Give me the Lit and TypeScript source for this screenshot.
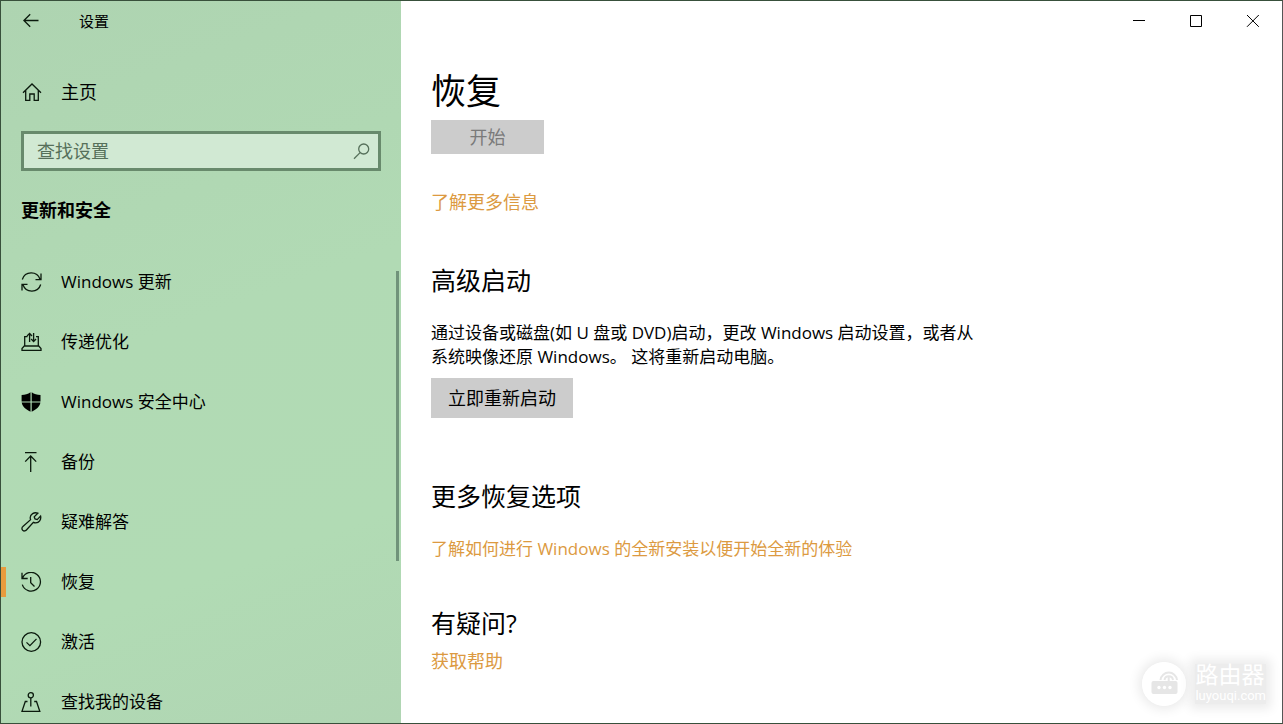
import { LitElement, html, svg, css, TemplateResult } from "lit";
import { customElement, state } from "lit/decorators.js";
import { classMap } from "lit/directives/class-map.js";

interface NavItem {
  id: string;
  label: string;
  icon: TemplateResult;
}

const NAV_ITEMS: NavItem[] = [
  {
    id: "update",
    label: "Windows 更新",
    icon: svg`<path d="M1.3 7.5A9.3 9.3 0 0 1 19 7.3M20 1.5V7.6H14.5M19.7 12.5A9.3 9.3 0 0 1 2 12.7M1 18.5V12.4H6.5"/>`,
  },
  {
    id: "delivery",
    label: "传递优化",
    icon: svg`<path d="M6.5 4.7H3.7V13.5L1 16.5V18.3H20V16.5L17.3 13.5V4.7H15M3.7 14H17.3M8.6 10V1.4M6 4L8.6 1.4L11 4M12.6 1V9.6M10.2 7L12.6 9.6L15 7"/>`,
  },
  {
    id: "security",
    label: "Windows 安全中心",
    icon: svg`<path class="solid" d="M9.5 .3V9.4H.6V3C4 2.9 7 2.2 9.5 .3ZM10.7 .3C13.2 2.2 16 2.9 19.5 3V9.4H10.7ZM.7 10.6H9.5V19.7C4.5 17.5 1.3 14.5 .7 10.6ZM10.7 10.6H19.4C18.8 14.5 15.7 17.5 10.7 19.7Z"/>`,
  },
  {
    id: "backup",
    label: "备份",
    icon: svg`<path d="M4 .7H15.5M9.7 20V4M4.2 9.6L9.7 4L15.2 9.6"/>`,
  },
  {
    id: "troubleshoot",
    label: "疑难解答",
    icon: svg`<path d="M16.8 1.2L13.2 4.8L14 7L16.2 7.6L19.6 4.1C20.4 7.6 18 11 14.6 10.9C13.7 10.9 13 10.7 12.4 10.4L5.4 18C4.4 19.2 2.8 19.3 1.7 18.3C.6 17.2 .7 15.6 1.9 14.6L9.6 7.7C9.3 7 9.2 6.3 9.2 5.6C9.3 2.2 13 -.2 16.8 1.2Z"/>`,
  },
  {
    id: "recovery",
    label: "恢复",
    icon: svg`<path d="M1 .8V6.5H6.7M1.5 6.3A9.3 9.3 0 1 1 1.3 12.6M9.7 5V10.7L13.5 14.5"/>`,
  },
  {
    id: "activation",
    label: "激活",
    icon: svg`<circle cx="10.3" cy="10" r="9.3"/><path d="M5.5 10.4L8.9 13.6L15.5 6.9"/>`,
  },
  {
    id: "find-device",
    label: "查找我的设备",
    icon: svg`<circle cx="9.8" cy="3.3" r="2.6"/><path d="M9.8 6V14.5M6.5 9.5H4.3L1 19.3H18.8L15.5 9.5H13.2"/>`,
  },
];

@customElement("settings-sidebar")
export class SettingsSidebar extends LitElement {
  @state() private current = "recovery";

  static styles = css`
    :host {
      display: flex;
      flex-direction: column;
      min-height: 0;
      overflow: hidden;
      background: linear-gradient(160deg, #aed4b1 0%, #b1dab4 45%, #b1dbb4 75%, #b0d5b3 100%);
      color: #000;
    }
    svg {
      fill: none;
      stroke: #0b1a0d;
      stroke-width: 1.3;
      flex: none;
    }
    .solid {
      fill: #000;
      stroke: none;
    }
    button {
      font: inherit;
      color: inherit;
      background: none;
      border: 0;
      padding: 0;
    }
    .titlebar {
      display: flex;
      align-items: center;
      height: 40px;
      flex: none;
    }
    .back {
      display: flex;
      align-items: center;
      justify-content: center;
      width: 60px;
      height: 40px;
    }
    .app-name {
      font-size: 15px;
      margin-left: 18px;
    }
    .home {
      display: flex;
      align-items: center;
      gap: 19px;
      height: 60px;
      flex: none;
      padding-left: 21px;
      margin-top: 21px;
      color: inherit;
      text-decoration: none;
    }
    .search {
      display: flex;
      align-items: center;
      box-sizing: border-box;
      height: 40px;
      flex: none;
      margin: 9px 20px 0;
      padding: 0 8px 0 13px;
      border: 3px solid #688a6c;
      background: #d1e9d3;
    }
    .search input {
      flex: 1;
      min-width: 0;
      font: inherit;
      border: 0;
      padding: 0;
      outline: 0;
      background: none;
    }
    .search input::placeholder {
      color: #56705a;
      opacity: 1;
    }
    .search svg {
      stroke: #56705a;
    }
    h2 {
      margin: 27px 0 30px;
      padding-left: 20px;
      font-size: 18px;
      line-height: 24px;
      font-weight: 700;
      flex: none;
    }
    .scroller {
      position: relative;
      flex: 1;
      min-height: 0;
      overflow: hidden;
      font-size: 17px;
    }
    .thumb {
      position: absolute;
      right: 2px;
      top: 19px;
      width: 3px;
      height: 290px;
      background: #70937a;
    }
    ul {
      list-style: none;
      margin: 0;
      padding: 0;
    }
    .item {
      display: flex;
      align-items: center;
      box-sizing: border-box;
      width: 100%;
      height: 60px;
      text-align: left;
    }
    .item::before {
      content: "";
      width: 5px;
      height: 30px;
      margin-right: 15px;
    }
    .item svg {
      margin-right: 19px;
    }
    .item.current::before {
      background: #e89b3e;
    }
  `;

  render() {
    return html`
      <div class="titlebar">
        <button class="back" aria-label="返回">
          <svg width="16" height="16" viewBox="0 0 16 16"><path d="M15.5 7.5H1M7.2 1.2L.9 7.5L7.2 13.8" /></svg>
        </button>
        <span class="app-name">设置</span>
      </div>
      <a class="home" href="#home">
        <svg width="20" height="20" viewBox="0 0 20 20">
          <path d="M1 10.7L10 2L19 10.7M3.7 8.3V18.3H7.8V12H12.2V18.3H16.3V8.3" />
        </svg>
        <span>主页</span>
      </a>
      <div class="search" role="search">
        <input type="text" aria-label="查找设置" placeholder="查找设置" />
        <svg width="17" height="17" viewBox="0 0 17 17"><circle cx="10.7" cy="6" r="5" /><path d="M7.1 9.6L1 15.7" /></svg>
      </div>
      <h2>更新和安全</h2>
      <nav class="scroller" aria-label="更新和安全">
        <ul>
          ${NAV_ITEMS.map(
            (item) => html`<li>
              <button
                class=${classMap({ item: true, current: item.id === this.current })}
                @click=${() => (this.current = item.id)}
              >
                <svg width="21" height="20" viewBox="0 0 21 20">${item.icon}</svg>
                <span>${item.label}</span>
              </button>
            </li>`
          )}
        </ul>
        <div class="thumb"></div>
      </nav>
    `;
  }
}

@customElement("recovery-page")
export class RecoveryPage extends LitElement {
  static styles = css`
    :host {
      display: block;
      min-width: 0;
      background: #fff;
      color: #000;
    }
    button {
      font: inherit;
      color: inherit;
      border: 0;
      padding: 0;
      background: none;
    }
    .window-buttons {
      display: flex;
      justify-content: flex-end;
      padding-right: 1px;
    }
    .window-buttons button {
      display: flex;
      align-items: center;
      justify-content: center;
      width: 57px;
      height: 39px;
    }
    svg {
      fill: none;
      stroke: #000;
    }
    .content {
      padding: 0 30px;
      max-width: 556px;
    }
    h1,
    h2,
    p {
      margin: 0;
      font-weight: 400;
    }
    h1 {
      font-size: 35px;
      line-height: 48px;
      margin-top: 27px;
    }
    h2 {
      font-size: 25px;
      line-height: 32px;
    }
    p {
      font-size: 17px;
      line-height: 24px;
    }
    a {
      color: #dc9a41;
      text-decoration: none;
    }
    .action {
      display: block;
      height: 40px;
      padding: 0 17px;
      background: #ccc;
    }
    .start {
      height: 34px;
      width: 113px;
      margin-top: 5px;
      color: #7a7a7a;
    }
    .more {
      font-size: 18px;
      margin-top: 36px;
    }
    .advanced {
      margin-top: 50px;
    }
    .advanced p {
      margin: 25px 0 9px;
    }
    .options {
      margin-top: 62px;
    }
    .options p {
      margin-top: 25px;
    }
    .questions {
      margin-top: 46px;
    }
    .questions p {
      font-size: 18px;
      margin-top: 10px;
    }
  `;

  render() {
    return html`
      <div class="window-buttons">
        <button aria-label="最小化"><svg width="13" height="13" viewBox="0 0 13 13"><path d="M1 6.5H13" /></svg></button>
        <button aria-label="最大化"><svg width="13" height="13" viewBox="0 0 13 13"><path d="M1.5 1.5H12.5V12.5H1.5Z" /></svg></button>
        <button aria-label="关闭"><svg width="13" height="13" viewBox="0 0 13 13"><path d="M1 1L12.8 12.8M12.8 1L1 12.8" /></svg></button>
      </div>
      <div class="content">
        <h1>恢复</h1>
        <button class="action start" disabled>开始</button>
        <p class="more"><a href="#more">了解更多信息</a></p>
        <section class="advanced">
          <h2>高级启动</h2>
          <p>通过设备或磁盘(如 U 盘或 DVD)启动，更改 Windows 启动设置，或者从系统映像还原 Windows。 这将重新启动电脑。</p>
          <button class="action">立即重新启动</button>
        </section>
        <section class="options">
          <h2>更多恢复选项</h2>
          <p><a href="#fresh">了解如何进行 Windows 的全新安装以便开始全新的体验</a></p>
        </section>
        <section class="questions">
          <h2>有疑问?</h2>
          <p><a href="#help">获取帮助</a></p>
        </section>
      </div>
    `;
  }
}

@customElement("app-root")
export class AppRoot extends LitElement {
  static styles = css`
    :host {
      display: grid;
      grid-template-columns: 400px minmax(0, 1fr);
      grid-template-rows: minmax(0, 1fr);
      position: relative;
      box-sizing: border-box;
      height: 100vh;
      overflow: hidden;
      border: 1px solid #38503b;
      border-right-color: #555;
      font-family: "Open Sans", "Noto Sans CJK SC", sans-serif;
      font-size: 18px;
      line-height: 24px;
    }
    .watermark {
      position: absolute;
      right: 16px;
      bottom: 17px;
      display: flex;
      align-items: center;
      gap: 9px;
      color: #fff;
      font-family: Roboto, "Noto Sans CJK SC", sans-serif;
    }
    .logo {
      border-radius: 50%;
      box-shadow: 0 0 12px 3px #e9e9e9;
    }
    .brand {
      display: flex;
      flex-direction: column;
      background: #ececec;
      box-shadow: 0 0 10px 5px #ececec;
    }
    .name {
      font-size: 23px;
      line-height: 24px;
    }
    .site {
      font-size: 13px;
      line-height: 16px;
    }
  `;

  render() {
    return html`
      <settings-sidebar></settings-sidebar>
      <recovery-page></recovery-page>
      <div class="watermark">
        <svg class="logo" width="44" height="44" viewBox="0 0 44 44">
          <circle cx="22" cy="22" r="22" fill="#fff" />
          <rect x="9.5" y="19" width="26" height="13" rx="2" fill="#e6e6e6" />
          <g fill="none" stroke="#e6e6e6" stroke-width="2">
            <path d="M18.5 18A8.3 8.3 0 0 1 35 18M22.5 18A4.3 4.3 0 0 1 31 18" />
            <path d="M26.7 15V20" />
          </g>
          <g fill="#fff"><circle cx="17" cy="25.5" r="1.7" /><circle cx="22.5" cy="25.5" r="1.7" /><circle cx="28" cy="25.5" r="1.7" /></g>
        </svg>
        <div class="brand">
          <span class="name">路由器</span>
          <span class="site">luyouqi.com</span>
        </div>
      </div>
    `;
  }
}
